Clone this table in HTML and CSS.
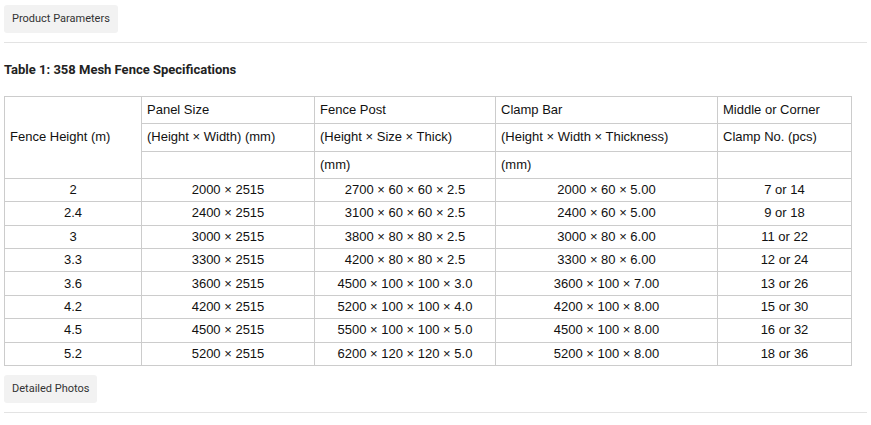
FILE: index.html
```html
<!DOCTYPE html>
<html>
<head>
<meta charset="utf-8">
<link rel="stylesheet" href="styles.css">
</head>
<body>
<div class="page">
  <div class="tab">Product Parameters</div>
  <div class="rule"></div>
  <h3 class="caption">Table 1: 358 Mesh Fence Specifications</h3>
  <table class="spec">
    <colgroup>
      <col class="c1"><col class="c2"><col class="c3"><col class="c4"><col class="c5">
    </colgroup>
    <tr class="hrow">
      <td rowspan="3">Fence Height (m)</td>
      <td>Panel Size</td>
      <td>Fence Post</td>
      <td>Clamp Bar</td>
      <td>Middle or Corner</td>
    </tr>
    <tr class="hrow">
      <td>(Height × Width) (mm)</td>
      <td>(Height × Size × Thick)</td>
      <td>(Height × Width × Thickness)</td>
      <td>Clamp No. (pcs)</td>
    </tr>
    <tr class="hrow">
      <td></td>
      <td>(mm)</td>
      <td>(mm)</td>
      <td></td>
    </tr>
    <tr class="drow"><td>2</td><td>2000 × 2515</td><td>2700 × 60 × 60 × 2.5</td><td>2000 × 60 × 5.00</td><td>7 or 14</td></tr>
    <tr class="drow"><td>2.4</td><td>2400 × 2515</td><td>3100 × 60 × 60 × 2.5</td><td>2400 × 60 × 5.00</td><td>9 or 18</td></tr>
    <tr class="drow"><td>3</td><td>3000 × 2515</td><td>3800 × 80 × 80 × 2.5</td><td>3000 × 80 × 6.00</td><td>11 or 22</td></tr>
    <tr class="drow"><td>3.3</td><td>3300 × 2515</td><td>4200 × 80 × 80 × 2.5</td><td>3300 × 80 × 6.00</td><td>12 or 24</td></tr>
    <tr class="drow"><td>3.6</td><td>3600 × 2515</td><td>4500 × 100 × 100 × 3.0</td><td>3600 × 100 × 7.00</td><td>13 or 26</td></tr>
    <tr class="drow"><td>4.2</td><td>4200 × 2515</td><td>5200 × 100 × 100 × 4.0</td><td>4200 × 100 × 8.00</td><td>15 or 30</td></tr>
    <tr class="drow"><td>4.5</td><td>4500 × 2515</td><td>5500 × 100 × 100 × 5.0</td><td>4500 × 100 × 8.00</td><td>16 or 32</td></tr>
    <tr class="drow"><td>5.2</td><td>5200 × 2515</td><td>6200 × 120 × 120 × 5.0</td><td>5200 × 100 × 8.00</td><td>18 or 36</td></tr>
  </table>
  <div class="tab">Detailed Photos</div>
  <div class="rule"></div>
</div>
</body>
</html>
```

FILE: styles.css
```css
html, body {
  margin: 0;
  padding: 0;
  background: #fff;
}
.page {
  padding: 5px 4px 0 4px;
  width: 863px;
  font-family: Roboto, "Liberation Sans", sans-serif;
  color: #333;
}
.tab {
  display: inline-block;
  background: #f2f2f2;
  border-radius: 3px;
  font-size: 11px;
  line-height: 28px;
  height: 28px;
  padding: 0 8px;
  color: #333;
}
.rule {
  height: 1px;
  background: #e3e3e3;
  margin-top: 9px;
}
.caption {
  margin: 19px 0 0 0;
  font-size: 13px;
  line-height: 16px;
  font-weight: bold;
  color: #222;
}
.spec {
  margin-top: 18px;
  margin-bottom: 9px;
  border-collapse: collapse;
  width: 847px;
  table-layout: fixed;
  font-family: "Liberation Sans", Arial, sans-serif;
  font-size: 13px;
  color: #111;
}
.c1 { width: 137px; }
.c2 { width: 173px; }
.c3 { width: 181px; }
.c4 { width: 222px; }
.c5 { width: 134px; }
.spec td {
  border: 1px solid #ccc;
  padding: 0 5px;
  line-height: 16px;
}
.hrow td {
  height: 26.3px;
  text-align: left;
  vertical-align: middle;
}
.drow td {
  height: 22.4px;
  text-align: center;
  padding: 0;
}
```
